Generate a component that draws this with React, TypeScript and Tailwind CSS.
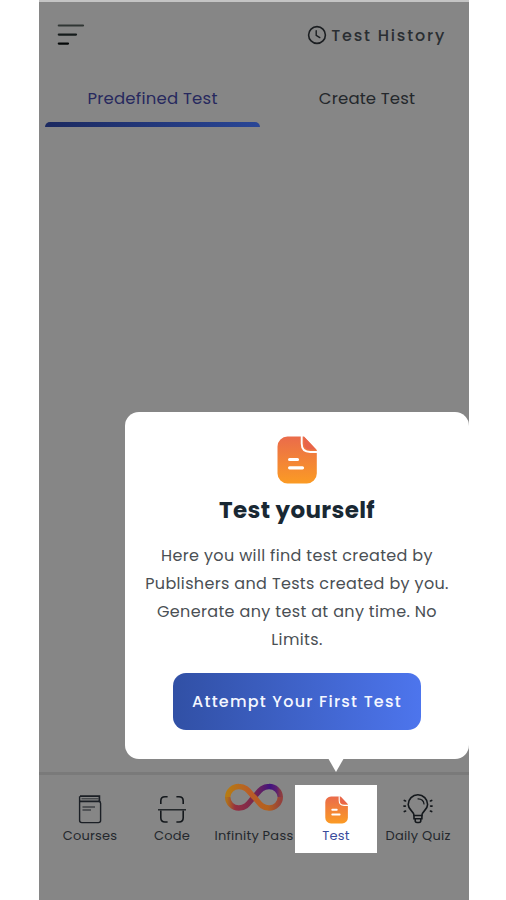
import type { ReactNode } from 'react'
import clsx from 'clsx'

interface NavItemProps {
  label: string
  icon: ReactNode
  active?: boolean
}

function MenuIcon() {
  return (
    <svg width="28" height="24" viewBox="0 0 28 24" fill="none" strokeWidth="2.2" strokeLinecap="round">
      <path d="M1.8 2.5H26" stroke="#303634" />
      <path d="M1.8 11.6H19" stroke="#151b1b" />
      <path d="M1.8 20.6H11" stroke="#050808" />
    </svg>
  )
}

function ClockIcon() {
  return (
    <svg width="20" height="20" viewBox="0 0 20 20" fill="none" stroke="#1b1e21" strokeWidth="1.6" strokeLinecap="round">
      <circle cx="10" cy="10" r="8.4" />
      <path d="M9.2 5.8V10.3L12.8 12.6" strokeWidth="1.4" />
    </svg>
  )
}

function DocIcon({ className }: { className: string }) {
  return (
    <svg className={className} viewBox="0 0 40 48" fill="none">
      <defs>
        <linearGradient id="doc" x1="0" y1="0" x2="0" y2="1">
          <stop offset="0" stopColor="#ea6b4b" />
          <stop offset="1" stopColor="#fb9b24" />
        </linearGradient>
      </defs>
      <path d="M10.5 0.5H27L39.8 14V37.5A10 10 0 0 1 29.8 47.5H10.5A10 10 0 0 1 0.5 37.5V10.5A10 10 0 0 1 10.5 0.5Z" fill="url(#doc)" />
      <path d="M24.7 0V7.5Q24.7 16 33.2 16H40" stroke="#fff" strokeWidth="1.9" />
      <path d="M27.2 1L39 13.6H33.2Q27.2 13.6 27.2 7.5Z" fill="#e8654a" />
      <path d="M12.6 23.5H20.5M12.6 31.8H25.5" stroke="#fff" strokeWidth="3.2" strokeLinecap="round" />
    </svg>
  )
}

function BookIcon() {
  return (
    <svg width="24" height="29" viewBox="0 0 24 29" fill="none" stroke="#1b1f25" strokeWidth="1.4">
      <path d="M2 1.2H21.4V6.3H2" strokeWidth="1.7" />
      <path d="M1.6 1.2V25.5Q1.6 27.6 3.8 27.6H20.4Q22.6 27.6 22.6 25.5V8.5Q22.6 6.5 20.8 6.3" />
      <path d="M3.5 3.8H20.5" strokeWidth="0.8" />
      <path d="M4.5 12H17M4.5 15H13" strokeWidth="1.1" />
    </svg>
  )
}

function ScanIcon() {
  return (
    <svg width="28" height="29" viewBox="0 0 28 29" fill="none" stroke="#14181c" strokeWidth="1.6">
      <path d="M2.8 9V6Q2.8 1.8 7 1.8H9.6M18.4 1.8H21Q25.2 1.8 25.2 6V9" />
      <path d="M2.8 15.5V22.8Q2.8 27 7 27H9.6M18.4 27H21Q25.2 27 25.2 22.8V15.5" />
      <path d="M0 14.8H28" strokeWidth="1.3" />
    </svg>
  )
}

function InfinityIcon() {
  return (
    <svg width="60" height="28" viewBox="0 0 60 28" fill="none" strokeWidth="5.4">
      <defs>
        <linearGradient id="infBack" x1="3" y1="0" x2="57" y2="0" gradientUnits="userSpaceOnUse">
          <stop offset="0" stopColor="#b0701a" />
          <stop offset="0.15" stopColor="#963040" />
          <stop offset="0.5" stopColor="#78284e" />
          <stop offset="0.8" stopColor="#421280" />
          <stop offset="0.92" stopColor="#5c2070" />
          <stop offset="1" stopColor="#8c3c40" />
        </linearGradient>
        <linearGradient id="infFront" x1="3" y1="0" x2="57" y2="0" gradientUnits="userSpaceOnUse">
          <stop offset="0" stopColor="#b67b12" />
          <stop offset="0.45" stopColor="#b95b28" />
          <stop offset="0.75" stopColor="#b5621c" />
          <stop offset="1" stopColor="#94403c" />
        </linearGradient>
      </defs>
      <path d="M3.7 14A11 11 0 0 0 15 25C23 25 25.5 18.5 30 14C34.5 9.5 37 3.5 45 3.5A11 11 0 0 1 56.3 14" stroke="url(#infBack)" />
      <path d="M3.7 14A11 11 0 0 1 15 3.5C23 3.5 25.5 9.5 30 14C34.5 18.5 37 25 45 25A11 11 0 0 0 56.3 14" stroke="url(#infFront)" />
    </svg>
  )
}

function BulbIcon() {
  return (
    <svg width="30" height="30" viewBox="0 0 30 30" fill="none" stroke="#14181c" strokeWidth="1.6" strokeLinecap="round">
      <path d="M11 21.5C11 17 5.2 16 5.2 10.5A9.6 9.6 0 0 1 24.6 10.5C24.6 16 18.9 17 18.9 21.5Z" />
      <path d="M11 21.5V24.8H18.9V21.5M12.2 25V26.5Q12.2 28.5 14 28.5H16Q17.8 28.5 17.8 26.5V25" />
      <path d="M15 4.8Q20.6 5 21 10" strokeWidth="1.2" />
      <path d="M1.3 6.4L2.6 7M0.9 12.1H2.4M1.3 17.6L2.6 17M28.7 6.4L27.4 7M29.1 12.1H27.6M28.7 17.6L27.4 17" />
    </svg>
  )
}

function NavItem({ label, icon, active }: NavItemProps) {
  return (
    <div className={clsx('flex h-[68px] w-[82px] flex-col items-center', active && 'bg-white')}>
      <div className="flex h-[39px] items-end justify-center">{icon}</div>
      <span
        className={clsx(
          'mt-[3px] whitespace-nowrap text-[13px] leading-[18px] tracking-[0.22px]',
          active ? 'text-[#394b9c]' : 'text-[#24282d]'
        )}
      >
        {label}
      </span>
    </div>
  )
}

export default function App() {
  return (
    <div className="flex h-[900px] w-[506px] justify-center overflow-hidden bg-white font-['Poppins','Inter',sans-serif]">
      <div className="relative ml-[2px] flex w-[430px] flex-col border-t-2 border-[#c4c4c4] bg-[#868686]">
        <header className="flex h-[66px] items-center justify-between pl-[18px] pr-[23px]">
          <MenuIcon />
          <div className="flex items-center gap-1">
            <ClockIcon />
            <span className="mt-[2px] whitespace-nowrap text-base font-medium tracking-[1.8px] text-[#2a2e32]">Test History</span>
          </div>
        </header>

        {/* Tabs */}
        <div className="flex pl-[6px] pr-[5px]">
          <div className="flex w-[215px] flex-col items-center">
            <span className="flex h-[54px] items-center whitespace-nowrap pt-[8px] text-[16.5px] tracking-[0.22px] text-[#27295e]">Predefined Test</span>
            <div className="h-[5px] w-full rounded-t-[5px] bg-linear-to-r from-[#1b2960] to-[#294696]" />
          </div>
          <div className="flex flex-1 flex-col items-center pl-[10px]">
            <span className="flex h-[54px] items-center whitespace-nowrap pt-[8px] text-[16.5px] tracking-[0.15px] text-[#24282c]">Create Test</span>
          </div>
        </div>

        <div className="flex-1" />

        {/* Bottom navigation */}
        <nav className="h-[128px] border-t-3 border-[#7a7a7a] pl-[10px] pt-[10px]">
          <div className="flex">
            <NavItem label="Courses" icon={<BookIcon />} />
            <NavItem label="Code" icon={<ScanIcon />} />
            <NavItem label="Infinity Pass" icon={<div className="pb-[13px]"><InfinityIcon /></div>} />
            <NavItem label="Test" icon={<DocIcon className="h-[28px] w-[23px]" />} active />
            <NavItem label="Daily Quiz" icon={<BulbIcon />} />
          </div>
        </nav>

        {/* Coach mark */}
        <div className="absolute right-0 top-[410px] flex h-[347px] w-[344px] flex-col items-center rounded-[14px] bg-white pt-6">
          <DocIcon className="h-[48px] w-[40px]" />
          <h1 className="mt-[10px] whitespace-nowrap text-[23px] font-bold leading-8 tracking-[0.35px] text-[#192833]">Test yourself</h1>
          <div className="mt-[16px] flex flex-col items-center whitespace-nowrap text-base leading-7 tracking-[0.35px] text-[#4a4f54]">
            <p>Here you will find test created by</p>
            <p>Publishers and Tests created by you.</p>
            <p>Generate any test at any time. No</p>
            <p>Limits.</p>
          </div>
          <button className="mt-[19px] h-[57px] w-[248px] whitespace-nowrap rounded-[13px] bg-linear-to-r from-[#3150a5] to-[#4d75ed] text-base font-medium tracking-[1.22px] text-[#f4f7ff]">
            Attempt Your First Test
          </button>
          <svg className="absolute left-[203px] top-[346px]" width="16" height="14" viewBox="0 0 16 14">
            <path d="M0 0H16L8 14Z" fill="#fff" />
          </svg>
        </div>
      </div>
    </div>
  )
}
